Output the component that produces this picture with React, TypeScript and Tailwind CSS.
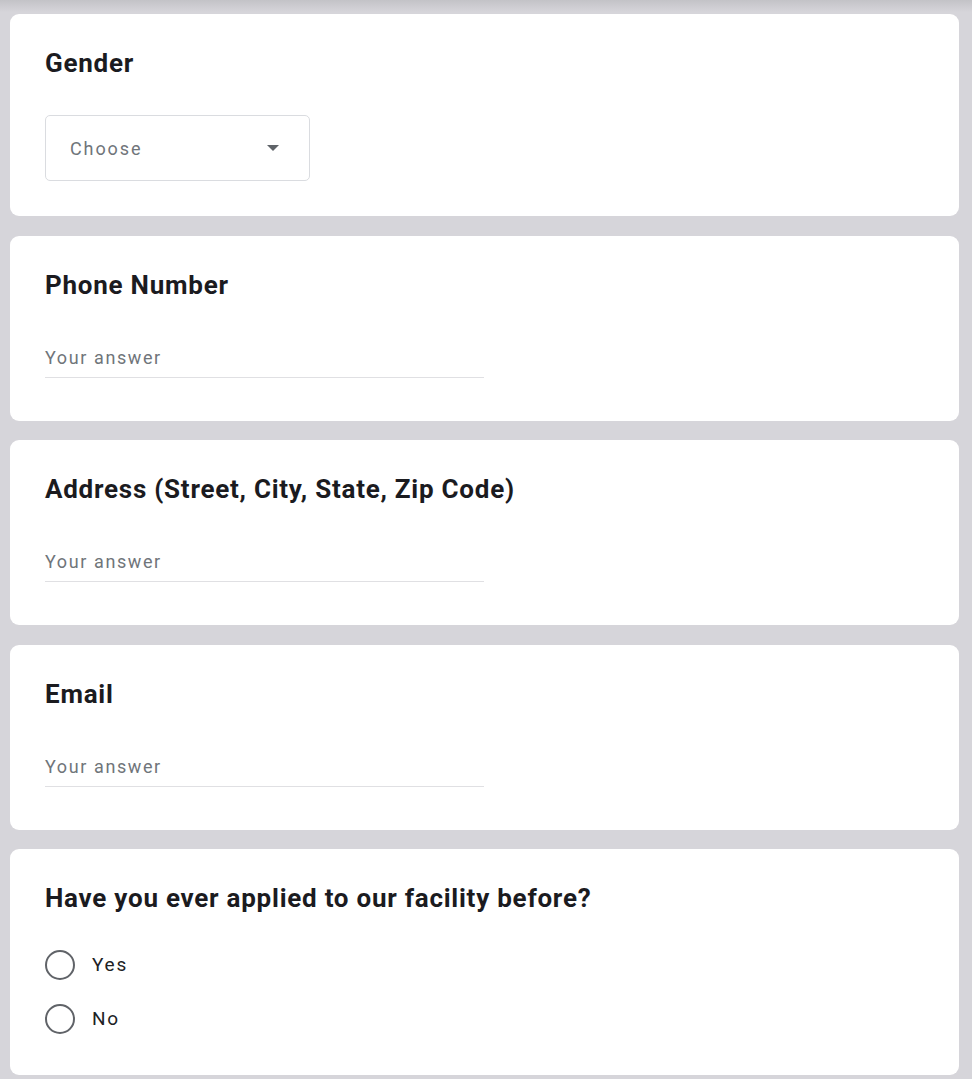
import React from "react";

function Title({ children }: { children: React.ReactNode }) {
  return (
    <h2 className="text-[26px] leading-[32px] font-bold text-[#1b1b1f] tracking-[0.75px]">
      {children}
    </h2>
  );
}

function Card({ children, className = "" }: { children: React.ReactNode; className?: string }) {
  return (
    <div className={"bg-white rounded-[9px] pl-[35px] pr-6 " + className}>{children}</div>
  );
}

function TextQuestion({ label, className = "" }: { label: string; className?: string }) {
  return (
    <Card className={"h-[185px] pt-[33px] " + className}>
      <Title>{label}</Title>
      <div className="mt-[45px] w-[439px] border-b border-[#e0e0e3] pb-[6px]">
        <span className="text-[18px] leading-[24px] text-[#70757a] tracking-[1.6px]">Your answer</span>
      </div>
    </Card>
  );
}

function Radio({ label }: { label: string }) {
  return (
    <div className="flex items-center h-[54px]">
      <div className="w-[30px] h-[30px] rounded-full border-2 border-[#606368] shrink-0" />
      <span className="ml-[17px] text-[19px] text-[#202124] tracking-[1.8px]">{label}</span>
    </div>
  );
}

export default function App() {
  return (
    <div
      className="h-[1079px] w-[972px] bg-[#d6d5da] pt-[14px] pl-[10px] pr-[13px] overflow-hidden"
      style={{ fontFamily: "Roboto, 'Noto Sans', Arial, sans-serif" }}
    >
      <div className="fixed top-0 left-0 right-0 h-[12px] bg-gradient-to-b from-[#c3c3c7] to-[#d6d5da]" />
      <div className="relative flex flex-col">
        <Card className="h-[202px] pt-[33px]">
          <Title>Gender</Title>
          <div className="mt-[36px] w-[265px] h-[66px] border border-[#dadce0] rounded-[5px] flex items-center justify-between pl-[24px] pr-[30px]">
            <span className="text-[18px] text-[#70757a] tracking-[1.9px]">Choose</span>
            <svg width="12" height="6" viewBox="0 0 12 6">
              <path d="M0 0 L12 0 L6 6 Z" fill="#5f6368" />
            </svg>
          </div>
        </Card>
        <TextQuestion label="Phone Number" className="mt-[20px]" />
        <TextQuestion label="Address (Street, City, State, Zip Code)" className="mt-[19px]" />
        <TextQuestion label="Email" className="mt-[20px]" />
        <Card className="h-[226px] pt-[33px] mt-[19px]">
          <Title>Have you ever applied to our facility before?</Title>
          <div className="mt-[24px]">
            <Radio label="Yes" />
            <Radio label="No" />
          </div>
        </Card>
      </div>
    </div>
  );
}
